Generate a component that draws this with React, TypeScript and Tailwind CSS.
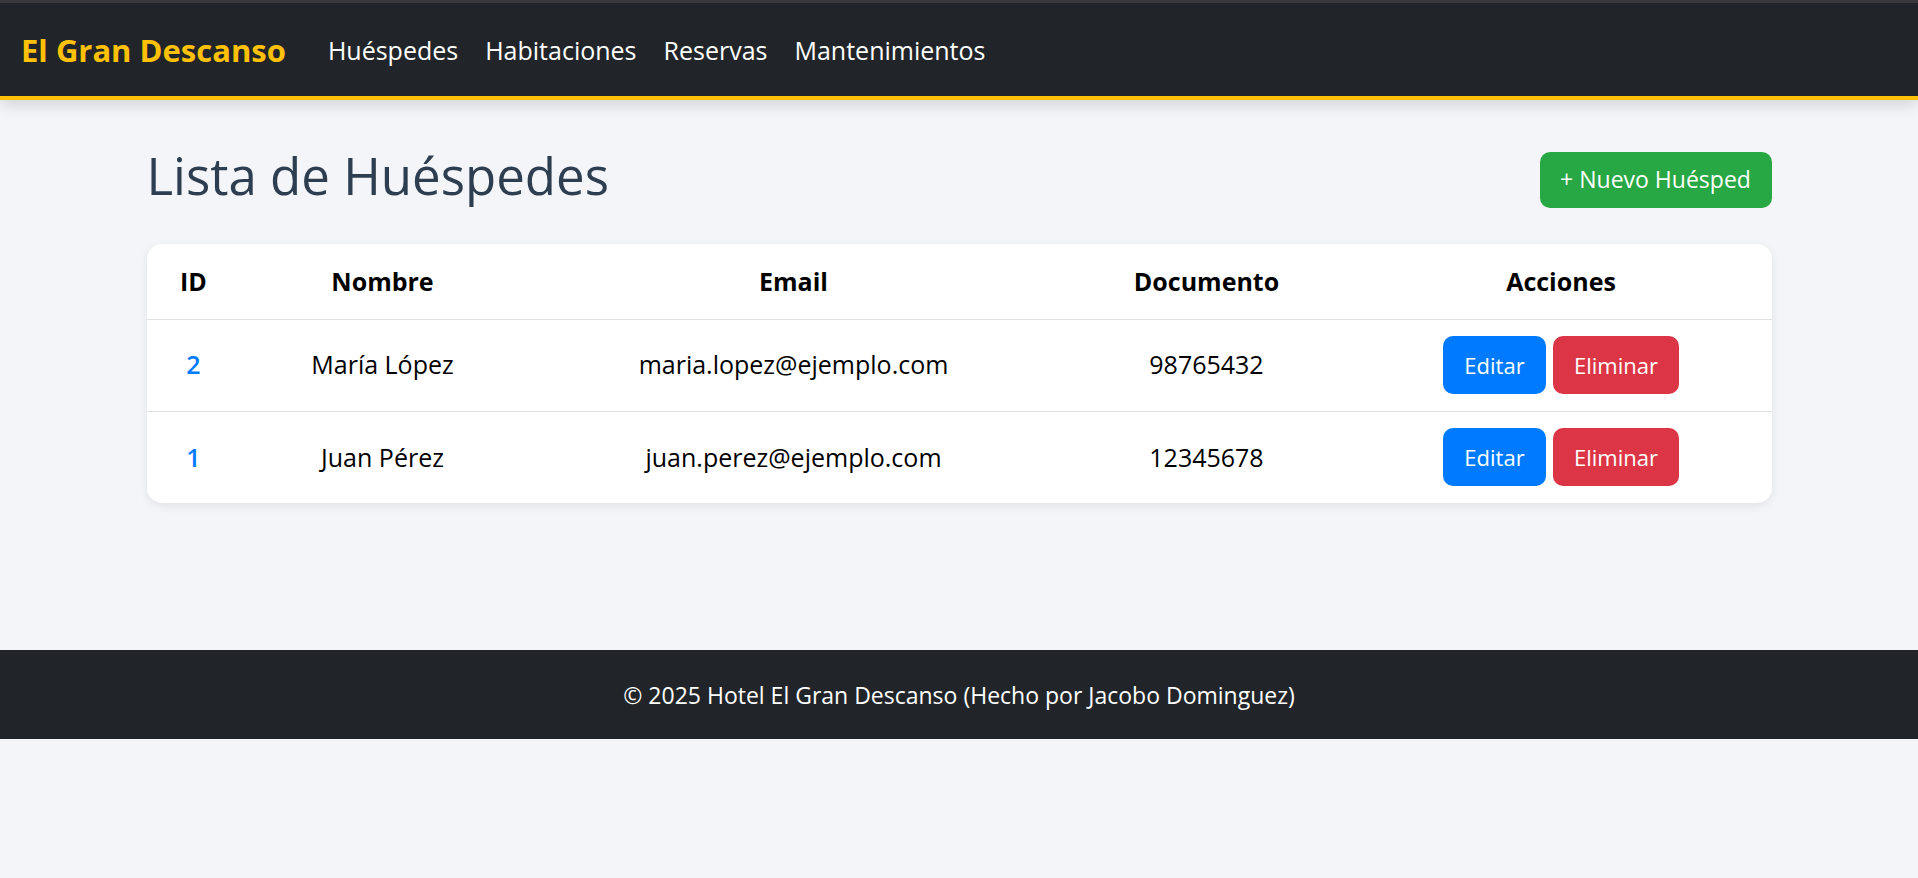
import React from "react";

interface Guest {
  id: number;
  nombre: string;
  email: string;
  documento: string;
}

const guests: Guest[] = [
  { id: 2, nombre: "María López", email: "maria.lopez@ejemplo.com", documento: "98765432" },
  { id: 1, nombre: "Juan Pérez", email: "juan.perez@ejemplo.com", documento: "12345678" },
];

const links = ["Huéspedes", "Habitaciones", "Reservas", "Mantenimientos"];

const Navbar = () => (
  <nav className="relative z-10 h-[100px] bg-[#212529] border-t-[3px] border-t-[#36383c] border-b-4 border-b-[#ffc107] shadow-[0_6px_14px_rgba(0,0,0,0.12)] flex items-center px-[21px]">
    <span className="text-[#ffc107] font-bold text-[31px] leading-none mr-[42px] mt-[2px]">El Gran Descanso</span>
    <ul className="flex items-center gap-[27px] mt-[2px]">
      {links.map((l) => (
        <li key={l} className="text-white text-[25px] leading-none">
          {l}
        </li>
      ))}
    </ul>
  </nav>
);

const GuestRow = ({ guest }: { guest: Guest }) => (
  <tr className="h-[92px] border-t border-[#dee2e6]">
    <td className="text-center text-[#007bff] font-semibold">{guest.id}</td>
    <td className="text-center">{guest.nombre}</td>
    <td className="text-center">{guest.email}</td>
    <td className="text-center">{guest.documento}</td>
    <td className="text-center">
      <div className="flex justify-center gap-[7px]">
        <button className="h-[58px] w-[103px] rounded-[10px] bg-[#007bff] text-white text-[22px]">Editar</button>
        <button className="h-[58px] w-[126px] rounded-[10px] bg-[#dc3545] text-white text-[22px]">Eliminar</button>
      </div>
    </td>
  </tr>
);

export default function App() {
  return (
    <div className="min-h-screen bg-[#f4f5f9] font-['Open_Sans',sans-serif]">
      <Navbar />
      <main className="min-h-[550px] w-[1625px] mx-auto pt-[42px]">
        <div className="flex items-center justify-between mb-[35px]">
          <h1 className="text-[51px] leading-[67px] text-[#2c3e50]">Lista de Huéspedes</h1>
          <button className="h-[56px] w-[232px] rounded-[10px] bg-[#28a745] text-white text-[23px] mt-[8px]">
            + Nuevo Huésped
          </button>
        </div>
        <div className="bg-white rounded-[15px] shadow-[0_3px_10px_rgba(0,0,0,0.08)] overflow-hidden">
          <table className="w-full table-fixed text-[25px] text-black">
            <colgroup>
              <col className="w-[94px]" />
              <col className="w-[284px]" />
              <col className="w-[538px]" />
              <col className="w-[288px]" />
              <col className="w-[421px]" />
            </colgroup>
            <thead>
              <tr className="h-[75px]">
                <th className="font-bold">ID</th>
                <th className="font-bold">Nombre</th>
                <th className="font-bold">Email</th>
                <th className="font-bold">Documento</th>
                <th className="font-bold">Acciones</th>
              </tr>
            </thead>
            <tbody>
              {guests.map((g) => (
                <GuestRow key={g.id} guest={g} />
              ))}
            </tbody>
          </table>
        </div>
      </main>
      <footer className="h-[89px] bg-[#212529] flex items-center justify-center text-white text-[23px] pt-[2px]">
        © 2025 Hotel El Gran Descanso (Hecho por Jacobo Dominguez)
      </footer>
    </div>
  );
}
